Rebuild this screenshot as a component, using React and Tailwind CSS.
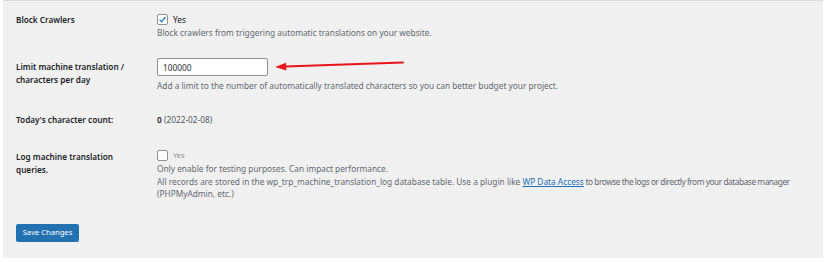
import React from "react";

const font = { fontFamily: '"Noto Sans", "Open Sans", sans-serif' };

function Checkbox({ checked }) {
  return (
    <span className="inline-flex h-[11px] w-[11px] shrink-0 items-center justify-center rounded-[2px] border border-[#8c8f94] bg-white">
      {checked && (
        <svg width="9" height="9" viewBox="0 0 10 10">
          <path d="M1.8 5.2 L4 7.4 L8.4 2.2" fill="none" stroke="#3582c4" strokeWidth="1.5" />
        </svg>
      )}
    </span>
  );
}

const labelCls = "w-[154px] shrink-0 pl-[13px] text-[8.2px] font-semibold leading-[13px] text-[#1d2327]";

export default function App() {
  return (
    <div className="h-[262px] w-[828px] bg-white" style={font}>
      <div className="relative ml-[3px] flex h-[258px] w-[820px] flex-col border-t border-[#dcdcde] bg-[#f0f0f1] text-[8.3px] text-[#1d2327]">
        {/* Row 1 */}
        <div className="mt-[11px] flex">
          <div className={`${labelCls} pt-[0.5px]`}>Block Crawlers</div>
          <div className="flex flex-1 flex-col">
            <div className="flex h-[14px] items-center gap-[5px]">
              <Checkbox checked />
              <span className="leading-[13px]">Yes</span>
            </div>
            <div className="leading-[13px] text-[#646970]">
              Block crawlers from triggering automatic translations on your website.
            </div>
          </div>
        </div>

        {/* Row 2 */}
        <div className="mt-[19px] flex">
          <div className={`${labelCls} pt-[1.5px]`}>
            Limit machine translation /<br />characters per day
          </div>
          <div className="flex flex-1 flex-col">
            <div className="flex h-[18px] w-[111px] items-center rounded-[2px] border border-[#8c8f94] bg-white pl-[5px] leading-[13px] text-[#2c3338]">
              100000
            </div>
            <div className="mt-[3px] leading-[13px] text-[#646970]">
              Add a limit to the number of automatically translated characters so you can better budget your project.
            </div>
          </div>
        </div>

        {/* Row 3 */}
        <div className="mt-[21px] flex">
          <div className={labelCls}>Today's character count:</div>
          <div className="leading-[13px]">
            <span className="font-semibold text-[#1d2327]">0</span>
            <span className="text-[#50575e]"> (2022-02-08)</span>
          </div>
        </div>

        {/* Row 4 */}
        <div className="mt-[23px] flex">
          <div className={`${labelCls} pt-[1px]`}>
            Log machine translation
            <br />
            queries.
          </div>
          <div className="flex flex-1 flex-col">
            <div className="flex h-[13px] items-center gap-[5px]">
              <Checkbox />
              <span className="text-[7.5px] leading-[13px] text-[#8c8f94]">Yes</span>
            </div>
            <div className="mt-[1px] leading-[12.5px] text-[#646970]">
              <div>Only enable for testing purposes. Can impact performance.</div>
              <div className="whitespace-nowrap">
                All records are stored in the wp_trp_machine_translation_log database table. Use a plugin like{" "}
                <span className="text-[#2271b1] underline">WP Data Access</span>
                <span className="tracking-[-0.45px]"> to browse the logs or directly from your database manager</span>
              </div>
              <div>(PHPMyAdmin, etc.)</div>
            </div>
          </div>
        </div>

        {/* Button */}
        <div className="mt-[23px] pl-[13px]">
          <button className="flex h-[18px] w-[63px] items-center justify-center rounded-[2px] bg-[#2271b1] text-[7.6px] leading-none text-white">
            Save Changes
          </button>
        </div>

        {/* Red annotation arrow */}
        <svg className="absolute left-[270px] top-[55px]" width="135" height="16" viewBox="0 0 135 16">
          <path d="M12 10.5 L130 6.5" stroke="#e8151b" strokeWidth="2" fill="none" strokeLinecap="round" />
          <path d="M2 11 L13 6.8 L13.4 14.5 Z" fill="#e8151b" />
        </svg>
      </div>
    </div>
  );
}
